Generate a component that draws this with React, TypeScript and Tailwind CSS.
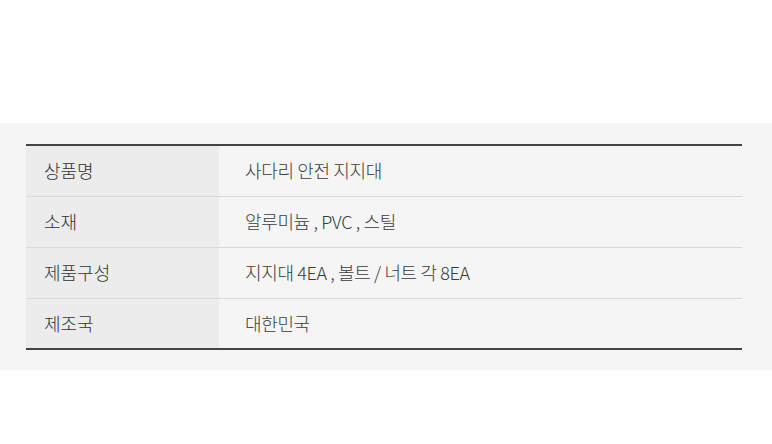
const rows = [
  ["상품명", "사다리 안전 지지대"],
  ["소재", "알루미늄 , PVC , 스틸"],
  ["제품구성", "지지대 4EA , 볼트 / 너트 각 8EA"],
  ["제조국", "대한민국"],
];

export default function App() {
  return (
    <div className="w-[772px] h-[444px] bg-white font-['Noto_Sans_CJK_KR','Noto_Sans',sans-serif]">
      <div className="h-[123px]" />
      <section className="bg-[#f5f5f5] px-[26px] pt-[21px] pb-[20px]">
        <table className="w-[716px] border-collapse border-t-2 border-b-2 border-[#444]">
          <tbody>
            {rows.map(([label, value], i) => (
              <tr key={label} className={i > 0 ? "border-t border-[#d9d9d9]" : ""}>
                <th className="w-[193px] h-[51px] bg-[#ececec] pl-[18px] text-left font-light text-[18px] text-[#333]">
                  {label}
                </th>
                <td className="h-[51px] pl-[26px] font-light text-[18px] text-[#3a3a3a] tracking-[-0.02em]">
                  {value}
                </td>
              </tr>
            ))}
          </tbody>
        </table>
      </section>
    </div>
  );
}
